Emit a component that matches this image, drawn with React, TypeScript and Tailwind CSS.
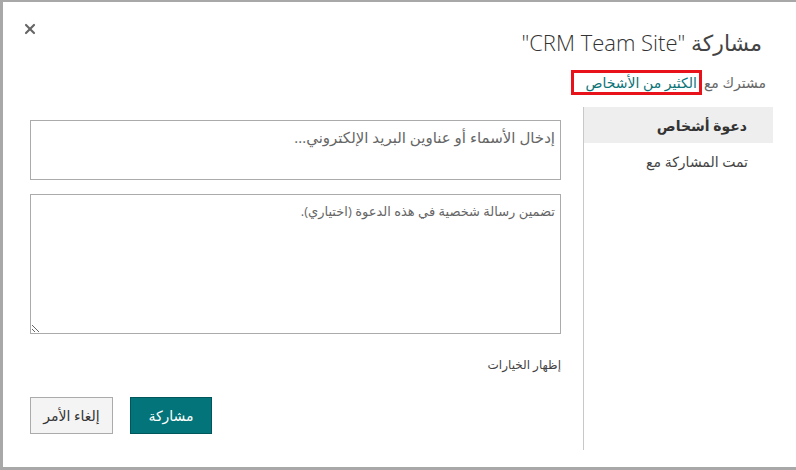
import { X } from "lucide-react";

export default function App() {
  return (
    <div
      dir="rtl"
      className="w-[796px] h-[470px] bg-white border-l-[3px] border-t-2 border-b-[3px] border-[#a8a8a8] flex flex-col text-[#333]"
      style={{ fontFamily: '"Open Sans", "DejaVu Sans", sans-serif' }}
    >
      {/* header */}
      <div className="flex items-start justify-between pr-[34px] pl-[19px] pt-[19px]">
        <h1 className="text-[22px] font-light leading-[34px] text-[#333] mt-[4px]">
          <span className="font-normal text-[#444]">مشاركة</span> "CRM Team Site"
        </h1>
        <button className="text-[#666] mt-[0px]">
          <X size={16} strokeWidth={3.2} />
        </button>
      </div>
      <div className="pr-[30px] mt-[11px] text-[14px] leading-[20px] flex items-center">
        <span className="text-[#666]">مشترك مع</span>
        <span className="mr-[2px] border-[3px] border-[#e8121b] pr-[2px] pl-[12px] leading-[19px] text-[#0b7478]">
          الكثير من الأشخاص
        </span>
      </div>

      {/* body */}
      <div className="flex mt-[12px] h-[343px]">
        <nav className="w-[190px] mr-[23px] border-l border-[#c8c8c8] flex flex-col text-[14px]">
          <div className="h-[36px] bg-[#eeeeee] pr-[26px] flex items-center font-bold text-[#333]">
            دعوة أشخاص
          </div>
          <div className="h-[36px] pr-[25px] flex items-center text-[#444]">
            تمت المشاركة مع
          </div>
        </nav>

        <div className="flex-1 pr-[22px] pl-[27px] pt-[13px] flex flex-col">
          <div className="h-[60px] border border-[#ababab] pr-[5px] pt-[6px] text-[15px] leading-[20px] text-[#666]">
            إدخال الأسماء أو عناوين البريد الإلكتروني...
          </div>
          <textarea
            className="mt-[14px] h-[140px] border border-[#ababab] pr-[5px] pt-[6px] text-[13px] leading-[20px] text-[#333] placeholder:text-[#666] outline-none"
            placeholder="تضمين رسالة شخصية في هذه الدعوة (اختياري)."
          />
          <div className="mt-[22px] text-[12px] leading-[18px] text-[#444]">
            إظهار الخيارات
          </div>
          <div className="mt-[23px] flex justify-end gap-[17px] text-[14px]">
            <button className="w-[82px] h-[37px] bg-[#037479] border border-[#00575b] text-white">
              مشاركة
            </button>
            <button className="w-[83px] h-[37px] bg-[#f4f4f4] border border-[#ababab] text-[#333]">
              إلغاء الأمر
            </button>
          </div>
        </div>
      </div>
    </div>
  );
}
